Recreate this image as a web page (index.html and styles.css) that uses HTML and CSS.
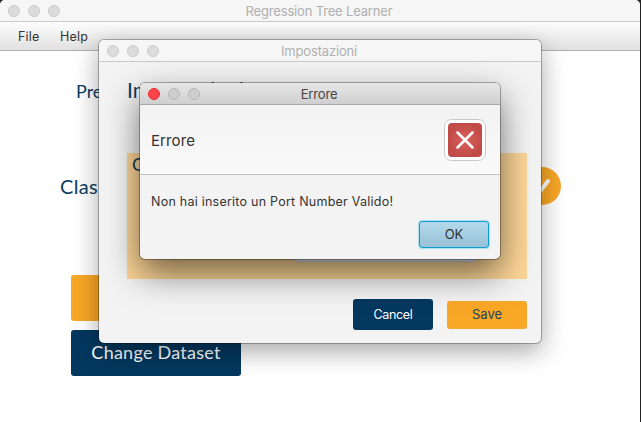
FILE: index.html
```html
<!DOCTYPE html>
<html lang="it">
<head>
<meta charset="utf-8">
<title>Regression Tree Learner</title>
<link rel="stylesheet" href="styles.css">
</head>
<body>
<main class="desktop">
  <section class="window main-window">
    <header class="titlebar">
      <div class="lights"><i></i><i></i><i></i></div>
      <h1 class="title main-title">Regression Tree Learner</h1>
    </header>
    <nav class="menubar"><span class="file">File</span><span class="help">Help</span></nav>
    <div class="main-body">
      <div class="pre">Pre</div>
      <div class="class-row">
        <span class="clas">Clas</span>
        <svg class="check" width="38" height="38" viewBox="0 0 38 38"><circle cx="19" cy="19" r="19" fill="#f9a727"/><path d="M10 19l6.500 6L25 14" fill="none" stroke="#fff" stroke-width="4" stroke-linecap="round" stroke-linejoin="round"/></svg>
      </div>
      <div class="big-btn orange"></div>
      <div class="big-btn navy"><span>Change Dataset</span></div>
    </div>
  </section>

  <section class="window settings-window">
    <header class="titlebar">
      <div class="lights"><i></i><i></i><i></i></div>
      <h2 class="title settings-title">Impostazioni</h2>
    </header>
    <div class="settings-body">
      <div class="heading">Impostazioni</div>
      <div class="panel"><span class="panel-label">C</span><div class="field"></div></div>
      <div class="actions">
        <div class="btn cancel"><span>Cancel</span></div>
        <div class="btn save"><span>Save</span></div>
      </div>
    </div>
  </section>

  <section class="window error-window">
    <header class="titlebar active">
      <div class="lights"><i class="close"></i><i></i><i></i></div>
      <h2 class="title error-title">Errore</h2>
    </header>
    <div class="error-head">
      <span class="error-label">Errore</span>
      <svg width="42" height="42" viewBox="0 0 42 42">
        <defs><radialGradient id="red"><stop offset="0" stop-color="#d95e5c"/><stop offset="1" stop-color="#c14c47"/></radialGradient></defs>
        <rect x=".5" y=".5" width="41" height="41" rx="7" fill="#fff" stroke="#c8c8c8"/>
        <rect x="4" y="4" width="34" height="34" rx="4" fill="url(#red)"/>
        <path d="M13.500 13.500l15 15M28.500 13.500l-15 15" stroke="#fff" stroke-width="2.500" stroke-linecap="round"/>
      </svg>
    </div>
    <div class="error-body">
      <p class="message">Non hai inserito un Port Number Valido!</p>
      <div class="ok"><span>OK</span></div>
    </div>
  </section>
</main>
</body>
</html>
```
FILE: styles.css
```css
* { box-sizing: border-box; }
body { margin: 0; background: #222; font-family: Inter, "Liberation Sans", sans-serif; color: #333; overflow: hidden; }
.desktop { position: relative; width: 641px; height: 422px; overflow: hidden; }
.window { position: absolute; overflow: hidden; background: #f3f3f3; }
.main-window { left: 0; top: 0; width: 640px; height: 422px; border-radius: 5px 5px 0 0; background: #fff; }
.settings-window { left: 99px; top: 40px; width: 442px; height: 303px; border-radius: 5px; box-shadow: 0 0 0 1px rgba(0,0,0,.28), 0 8px 26px rgba(0,0,0,.36); }
.error-window { left: 140px; top: 83px; width: 360px; height: 176px; border-radius: 5px; box-shadow: 0 0 0 1px rgba(0,0,0,.3), 0 14px 34px rgba(0,0,0,.55); }

.titlebar { display: grid; align-items: center; height: 22px; background: #f6f6f6; border-bottom: 1px solid #c9c9c9; }
.titlebar > * { grid-area: 1 / 1; }
.titlebar.active { background: linear-gradient(#e7e7e7, #cfcfcf); border-color: #a9a9a9; }
.lights { display: flex; gap: 8px; padding-left: 8px; }
.lights i { width: 12px; height: 12px; border-radius: 50%; background: #dcdcdc; border: 1px solid #c9c9c9; }
.active .lights i { background: #cdcdcd; border-color: #b6b6b6; }
.active .lights .close { background: #fc4548; border-color: #e52c33; }
.title { margin: 0; padding: 2px 2px 0 0; text-align: center; font-size: 13px; line-height: 19px; font-weight: 400; letter-spacing: -.17px; color: #b0b0b0; }
.error-title { color: #454545; }

.menubar { display: flex; height: 29px; padding: 0 18px; gap: 20.500px; font-size: 12.500px; letter-spacing: .2px; line-height: 29px; background: linear-gradient(#fdfdfd, #e1e1e1); border-bottom: 1px solid #b0b0b0; }
.main-body { padding-left: 60px; color: #0c3b5e; font-family: Lato, "Open Sans", sans-serif; }
.pre { height: 122px; padding: 29px 0 0 16px; font-size: 18px; line-height: 22px; }
.class-row { display: flex; width: 501px; height: 102px; justify-content: space-between; }
.clas { font-size: 20px; line-height: 26px; letter-spacing: .3px; }
.check { margin-top: -6px; }
.big-btn { width: 170px; height: 46px; margin: 0 0 9px 11px; border-radius: 3px; font-size: 18px; letter-spacing: .25px; line-height: 45px; text-align: center; }
.orange { background: #f9a727; }
.navy { background: #04385f; color: #fff; }

.settings-body { padding: 15px 14px 0 28px; }
.heading { height: 76px; font: 21px/25px Lato, sans-serif; color: #0c3b5e; }
.panel { width: 400px; height: 126px; padding-left: 5px; background: #fdd597; color: #0c3b5e; }
.panel-label { display: block; height: 82px; font: 18px/23px Lato, sans-serif; }
.field { width: 182px; height: 27px; margin-left: 163px; background: #e8eaf1; border: 1px solid #c8ced8; border-radius: 3px; }
.actions { display: flex; align-items: center; gap: 14px; padding: 20px 0 0 226px; }
.btn { width: 80px; border-radius: 3px; font-size: 13px; text-align: center; }
.cancel { height: 31px; line-height: 31px; background: #04385f; color: #fff; font-size: 12.500px; letter-spacing: -.3px; }
.save { height: 28px; line-height: 27px; background: #f9a727; color: #21445a; }

.error-head { display: flex; align-items: center; justify-content: space-between; height: 70px; padding: 0 14px 0 11px; border-bottom: 1px solid #c4c4c4; background: linear-gradient(#f2f2f2, #fafafa); }
.error-label { padding-top: 2px; font-size: 15px; letter-spacing: .1px; }
.error-body { padding: 17px 11px 0; }
.message { margin: 0; font-size: 12.500px; letter-spacing: .24px; line-height: 20px; white-space: nowrap; }
.ok { width: 70px; height: 27px; margin: 9px 0 0 268px; border: 1.500px solid #109bcd; border-radius: 3px; background: linear-gradient(#b3d9ec, #98c1d5); box-shadow: 0 0 1px 1px #a8dff0; text-align: center; font-size: 13px; line-height: 25px; }
```
